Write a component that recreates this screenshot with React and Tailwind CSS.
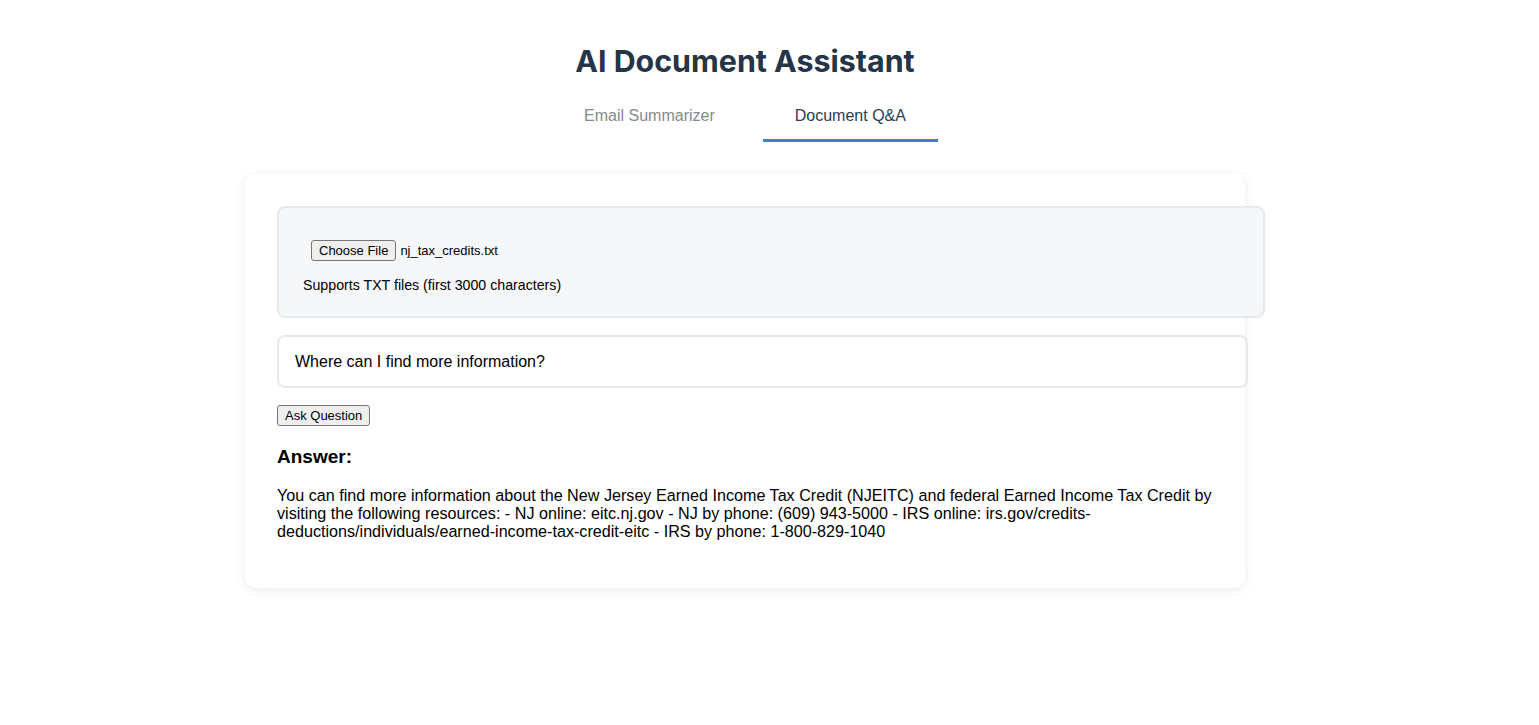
export default function App() {
  return (
    <div className="min-h-screen bg-white font-['Liberation_Sans',Arial,sans-serif] text-black">
      <div className="flex flex-col items-center pt-[40px] pr-[49px]">
        {/* Header */}
        <h1 className="font-['Inter',sans-serif] text-[30.4px] font-bold leading-[42px] text-[#253547]">
          AI Document Assistant
        </h1>

        {/* Tabs */}
        <div className="mt-[18px] flex gap-[16px] text-[16px]">
          <button className="h-[42px] border-b-[3px] border-transparent px-[32px] pb-[8px] text-[#7f8c8d]">
            Email Summarizer
          </button>
          <button className="h-[42px] border-b-[3px] border-[#3585d0] px-[32px] pb-[8px] text-[#2c3e50]">
            Document Q&amp;A
          </button>
        </div>

        {/* Card */}
        <div className="mt-[32px] w-[1000px] rounded-[12px] bg-white p-[32px] shadow-[0_2px_12px_rgba(0,0,0,0.08)]">
          {/* Upload box */}
          <div className="w-[988px] rounded-[8px] border-2 border-[#e6eaec] bg-[#f6f7f9] px-[24px] pt-[32px] pb-[22px]">
            <div className="ml-[8px] flex items-center text-[13px]">
              <button className="h-[21px] rounded-[3px] border border-[#767676] bg-[#efefef] px-[7px] text-[13px] leading-none">
                Choose File
              </button>
              <span className="ml-[4px]">nj_tax_credits.txt</span>
            </div>
            <p className="mt-[15px] text-[14.2px] leading-[18px]">Supports TXT files (first 3000 characters)</p>
          </div>

          {/* Question input */}
          <div className="mt-[17px] flex h-[53px] w-[971px] items-center rounded-[8px] border-2 border-[#e6eaec] px-[16px] text-[16px]">
            Where can I find more information?
          </div>

          <button className="mt-[17px] h-[21px] rounded-[3px] border border-[#767676] bg-[#efefef] px-[7px] text-[13px] leading-none">
            Ask Question
          </button>

          {/* Answer */}
          <h3 className="mt-[19px] text-[19px] font-bold leading-[22px]">Answer:</h3>
          <p className="mt-[18px] text-[16.15px] leading-[18px]">
            You can find more information about the New Jersey Earned Income Tax Credit (NJEITC) and federal Earned Income Tax Credit by
            visiting the following resources: - NJ online: eitc.nj.gov - NJ by phone: (609) 943-5000 - IRS online: irs.gov/credits-deductions/individuals/earned-income-tax-credit-eitc - IRS by phone: 1-800-829-1040
          </p>
          <div className="h-[16px]" />
        </div>
      </div>
    </div>
  );
}
